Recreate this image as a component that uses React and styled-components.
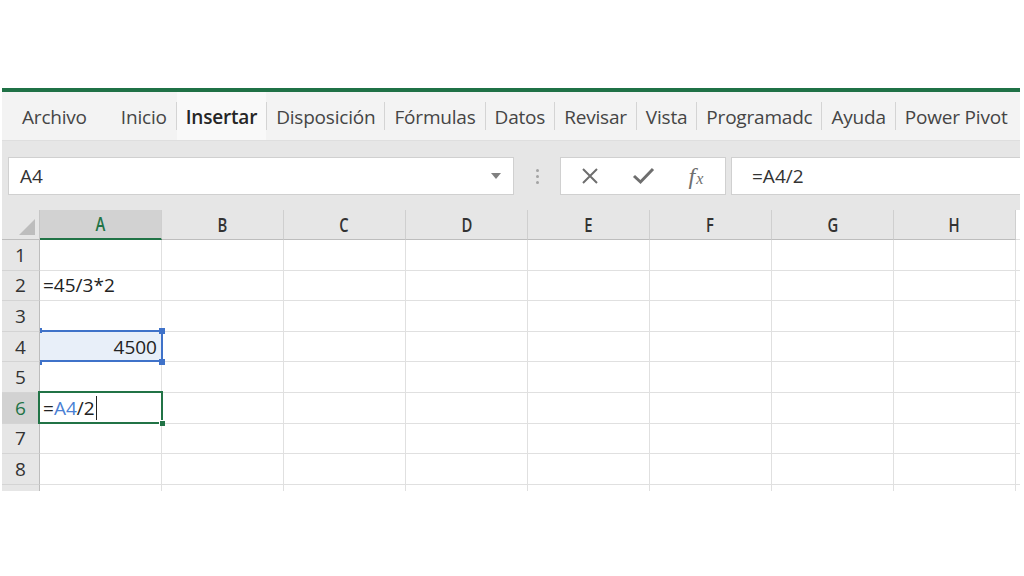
import React from "react";
import styled, { createGlobalStyle } from "styled-components";

const Global = createGlobalStyle`
  html, body { margin: 0; padding: 0; background: #ffffff; }
  body { width: 1024px; height: 576px; overflow: hidden; font-family: "Open Sans", "Noto Sans", sans-serif; }
`;

const Frame = styled.div`
  margin: 88px 4px 0 2px;
  width: 1018px;
  overflow: hidden;
`;

const GreenBar = styled.div`
  height: 4px;
  background: #1f7146;
`;

const TabBar = styled.div`
  height: 48px;
  background: #f3f3f3;
  display: flex;
  align-items: center;
  padding-left: 20px;
  white-space: nowrap;
  overflow: hidden;
`;

const Tab = styled.div`
  height: 48px;
  display: flex;
  align-items: center;
  padding: 1px ${(p) => p.$pad ?? 9}px 0;
  box-sizing: border-box;
  margin-left: ${(p) => p.$ml ?? 0}px;
  font-size: 19px;
  color: ${(p) => (p.$active ? "#262626" : "#454545")};
  font-weight: ${(p) => (p.$active ? 600 : 400)};
  background: ${(p) => (p.$active ? "#f9f9f9" : "transparent")};
  letter-spacing: -0.2px;
`;

const Sep = styled.div`
  width: 1px;
  height: 28px;
  flex-shrink: 0;
  background: #d4d4d4;
`;

const FormulaArea = styled.div`
  height: 70px;
  background: #e6e6e6;
  display: flex;
  align-items: flex-start;
  padding: 16px 0 0 6px;
  box-sizing: border-box;
  border-top: 1px solid #dedede;
`;

const NameBox = styled.div`
  width: 506px;
  height: 38px;
  box-sizing: border-box;
  background: #fff;
  border: 1px solid #d0d0d0;
  display: flex;
  align-items: center;
  justify-content: space-between;
  padding: 0 12px 0 11px;
  font-size: 19px;
  color: #333;
`;

const Caret = styled.div`
  width: 0;
  height: 0;
  border-left: 5px solid transparent;
  border-right: 5px solid transparent;
  border-top: 6px solid #808080;
`;

const Dots = styled.div`
  width: 46px;
  height: 38px;
  display: flex;
  flex-direction: column;
  align-items: center;
  justify-content: center;
  gap: 3px;
  span {
    width: 3px;
    height: 3px;
    border-radius: 50%;
    background: #a3a3a3;
  }
`;

const ButtonsBox = styled.div`
  width: 166px;
  height: 38px;
  box-sizing: border-box;
  background: #fff;
  border: 1px solid #d0d0d0;
  display: flex;
  align-items: center;
  padding-left: 20px;
`;

const IconSlot = styled.div`
  width: ${(p) => p.$w || 40}px;
  display: flex;
  align-items: center;
  color: #6e6e6e;
`;

const Fx = styled.span`
  font-family: "Liberation Serif", "DejaVu Serif", serif;
  font-style: italic;
  font-size: 24px;
  color: #6e6e6e;
  line-height: 1;
  sub {
    font-size: 16px;
    vertical-align: baseline;
    margin-left: 1px;
  }
`;

const FormulaInput = styled.div`
  flex: 1;
  height: 38px;
  margin-left: 5px;
  box-sizing: border-box;
  background: #fff;
  border: 1px solid #d0d0d0;
  border-right: none;
  display: flex;
  align-items: center;
  padding-left: 20px;
  font-size: 19px;
  color: #333;
`;

const Grid = styled.div`
  display: grid;
  grid-template-columns: 38px repeat(8, 122px) 4px;
  grid-template-rows: 30px repeat(8, 30.6px) 6px;
  background: #fff;
`;

const Corner = styled.div`
  background: #e6e6e6;
  border-right: 1px solid #c6c6c6;
  border-bottom: 1px solid #bdbdbd;
  position: relative;
  &::after {
    content: "";
    position: absolute;
    right: 4px;
    bottom: 4px;
    width: 0;
    height: 0;
    border-left: 16px solid transparent;
    border-bottom: 16px solid #bdbdbd;
  }
`;

const ColHead = styled.div`
  background: ${(p) => (p.$active ? "#d2d2d2" : "#e6e6e6")};
  border-right: 1px solid #cfcfcf;
  border-bottom: ${(p) => (p.$active ? "2px solid #217346" : "1px solid #bdbdbd")};
  display: flex;
  align-items: center;
  justify-content: center;
  font-size: 19px;
  font-weight: 600;
  color: ${(p) => (p.$active ? "#217346" : "#333")};
  span { display: inline-block; transform: scaleX(0.78); }
`;

const RowHead = styled.div`
  background: ${(p) => (p.$active ? "#d2d2d2" : "#e6e6e6")};
  border-right: 1px solid #bdbdbd;
  border-bottom: 1px solid #d4d4d4;
  display: flex;
  align-items: center;
  justify-content: center;
  font-size: 19px;
  color: ${(p) => (p.$active ? "#217346" : "#333")};
`;

const Cell = styled.div`
  position: relative;
  z-index: ${(p) => (p.$top ? 2 : "auto")};
  border-right: 1px solid #e0e0e0;
  border-bottom: 1px solid #e0e0e0;
  display: flex;
  align-items: center;
  justify-content: ${(p) => (p.$right ? "flex-end" : "flex-start")};
  padding: 0 ${(p) => (p.$right ? 4 : 3)}px 0 3px;
  font-size: 19px;
  color: #222;
  background: ${(p) => (p.$fill ? "#e8eff9" : "#fff")};
  white-space: nowrap;
  overflow: visible;
`;

const Tail = styled.div`
  background: #fff;
  border-bottom: 1px solid #e0e0e0;
`;

const Filler = styled.div`
  background: ${(p) => (p.$head ? "#e6e6e6" : "#fff")};
  border-right: 1px solid ${(p) => (p.$head ? "#bdbdbd" : "#e0e0e0")};
`;

const BlueRange = styled.div`
  position: absolute;
  left: 0;
  top: -2px;
  right: -2px;
  bottom: -1px;
  border-top: 2px solid #3f72c9;
  border-bottom: 2px solid #3f72c9;
  border-right: 2px solid #3f72c9;
  pointer-events: none;
`;

const Handle = styled.div`
  position: absolute;
  width: ${(p) => p.$w}px;
  height: ${(p) => p.$h}px;
  background: #3f72c9;
  ${(p) => (p.$top ? "top: -4px;" : "bottom: -4px;")}
  ${(p) => (p.$left ? "left: 0;" : "right: -4px;")}
`;

const ActiveBox = styled.div`
  position: absolute;
  left: -2px;
  top: -2px;
  right: -2px;
  bottom: -1px;
  border: 2px solid #217346;
  pointer-events: none;
  &::after {
    content: "";
    position: absolute;
    right: -4px;
    bottom: -4px;
    width: 5px;
    height: 5px;
    background: #217346;
    border-left: 1px solid #fff;
    border-top: 1px solid #fff;
  }
`;

const Ref = styled.span`
  color: #4a7fd4;
`;

const Cursor = styled.span`
  display: inline-block;
  width: 1px;
  height: 24px;
  background: #222;
  margin-left: 1px;
`;

const tabs = [
  { t: "Archivo", pad: 0 },
  { t: "Inicio", ml: 25 },
  { t: "Insertar", active: true },
  { t: "Disposición" },
  { t: "Fórmulas" },
  { t: "Datos" },
  { t: "Revisar" },
  { t: "Vista" },
  { t: "Programadc" },
  { t: "Ayuda" },
  { t: "Power Pivot" },
];

const cols = ["A", "B", "C", "D", "E", "F", "G", "H"];

function CellContent({ r, c }) {
  if (c !== 0) return <Cell />;
  if (r === 2) return <Cell>=45/3*2</Cell>;
  if (r === 4)
    return (
      <Cell $right $fill $top>
        4500
        <BlueRange />
        <Handle $top $left $w={2} $h={5} />
        <Handle $top $w={6} $h={6} />
        <Handle $left $w={2} $h={5} />
        <Handle $w={6} $h={6} />
      </Cell>
    );
  if (r === 6)
    return (
      <Cell $top>
        =<Ref>A4</Ref>/2
        <Cursor />
        <ActiveBox />
      </Cell>
    );
  return <Cell />;
}

export default function App() {
  return (
    <>
      <Global />
      <Frame>
        <GreenBar />
        <TabBar>
          {tabs.map((tb, i) => (
            <React.Fragment key={tb.t}>
              {i > 1 && <Sep />}
              <Tab $active={tb.active} $ml={tb.ml} $pad={tb.pad}>
                {tb.t}
              </Tab>
            </React.Fragment>
          ))}
        </TabBar>
        <FormulaArea>
          <NameBox>
            <span>A4</span>
            <Caret />
          </NameBox>
          <Dots>
            <span />
            <span />
            <span />
          </Dots>
          <ButtonsBox>
            <IconSlot $w={56}>
              <svg width="18" height="18" viewBox="0 0 18 18">
                <path d="M2 2 L16 16 M16 2 L2 16" stroke="#6e6e6e" strokeWidth="2" fill="none" />
              </svg>
            </IconSlot>
            <IconSlot $w={62}>
              <svg width="23" height="18" viewBox="0 0 23 18">
                <path d="M2 9 L8.5 15 L21 2" stroke="#6e6e6e" strokeWidth="3" fill="none" />
              </svg>
            </IconSlot>
            <IconSlot>
              <Fx>
                f<sub>x</sub>
              </Fx>
            </IconSlot>
          </ButtonsBox>
          <FormulaInput>=A4/2</FormulaInput>
        </FormulaArea>
        <Grid>
          <Corner />
          {cols.map((c, i) => (
            <ColHead key={c} $active={i === 0}>
              <span>{c}</span>
            </ColHead>
          ))}
          <Tail />
          {[1, 2, 3, 4, 5, 6, 7, 8].map((r) => (
            <React.Fragment key={r}>
              <RowHead $active={r === 6}>{r}</RowHead>
              {cols.map((c, ci) => (
                <CellContent key={c} r={r} c={ci} />
              ))}
              <Tail />
            </React.Fragment>
          ))}
          <Filler $head />
          {cols.map((c) => (
            <Filler key={c} />
          ))}
        </Grid>
      </Frame>
    </>
  );
}
